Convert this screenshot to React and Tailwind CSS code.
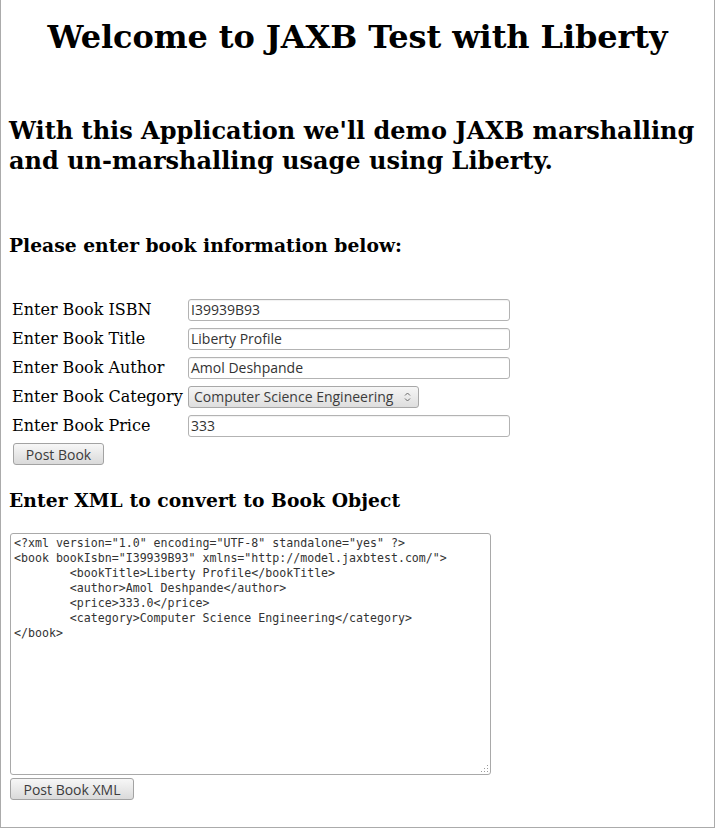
import React from "react";

const serif = { fontFamily: "'DejaVu Serif', serif" };
const uiFont = { fontFamily: "'Open Sans', 'Noto Sans', sans-serif" };
const mono = { fontFamily: "'DejaVu Sans Mono', monospace" };

const xml = `<?xml version="1.0" encoding="UTF-8" standalone="yes" ?>
<book bookIsbn="I39939B93" xmlns="http://model.jaxbtest.com/">
\t<bookTitle>Liberty Profile</bookTitle>
\t<author>Amol Deshpande</author>
\t<price>333.0</price>
\t<category>Computer Science Engineering</category>
</book>`;

function TextInput({ value }) {
  return (
    <div
      className="h-[22px] w-[322px] rounded-[3px] border border-[#b3b3b3] bg-white px-[2px] flex items-center text-[14px] text-[#333333] shadow-[inset_0_1px_1px_rgba(0,0,0,0.06)]"
      style={uiFont}
    >
      {value}
    </div>
  );
}

function Select({ value }) {
  return (
    <div
      className="h-[22px] w-[231px] rounded-[3px] border border-[#a8a8a8] bg-gradient-to-b from-[#f6f6f6] to-[#dedede] pl-[5px] pr-[7px] flex items-center justify-between text-[14px] text-[#3c3c3c]"
      style={uiFont}
    >
      <span>{value}</span>
      <svg width="7" height="12" viewBox="0 0 7 12" className="text-[#6a6a6a]">
        <path d="M1 4.5 L3.5 2 L6 4.5" fill="none" stroke="currentColor" strokeWidth="1" />
        <path d="M1 7.5 L3.5 10 L6 7.5" fill="none" stroke="currentColor" strokeWidth="1" />
      </svg>
    </div>
  );
}

function Button({ children, w }) {
  return (
    <div
      className={`h-[22px] ${w} rounded-[3px] border border-[#a3a3a3] bg-gradient-to-b from-[#f7f7f7] to-[#dadada] flex items-center justify-center text-[14px] text-[#3c3c3c]`}
      style={uiFont}
    >
      {children}
    </div>
  );
}

const rows = [
  ["Enter Book ISBN", <TextInput value="I39939B93" />],
  ["Enter Book Title", <TextInput value="Liberty Profile" />],
  ["Enter Book Author", <TextInput value="Amol Deshpande" />],
  ["Enter Book Category", <Select value="Computer Science Engineering" />],
  ["Enter Book Price", <TextInput value="333" />],
];

export default function App() {
  return (
    <div className="w-[715px] h-[828px] bg-white border-l border-r border-b border-[#ababab] overflow-hidden text-black">
      <div className="pl-[8px] flex flex-col items-start">
        <h1
          className="self-stretch ml-[-8px] mt-[19px] text-center text-[32px] leading-[37px] font-bold tracking-[-0.1px]"
          style={serif}
        >
          Welcome to JAXB Test with Liberty
        </h1>
        <h2 className="mt-[60px] text-[24px] leading-[30px] font-bold" style={serif}>
          With this Application we'll demo JAXB marshalling
          <br />
          and un-marshalling usage using Liberty.
        </h2>
        <h3 className="mt-[58px] text-[18.72px] leading-[22px] font-bold" style={serif}>
          Please enter book information below:
        </h3>
        <div className="mt-[39px] ml-[3px] flex flex-col">
          {rows.map(([label, control], i) => (
            <div key={i} className="h-[29px] flex items-center">
              <div className="w-[176px] text-[16px] leading-[19px]" style={serif}>
                {label}
              </div>
              {control}
            </div>
          ))}
        </div>
        <div className="mt-[3px] ml-[4px]">
          <Button w="w-[91px]">Post Book</Button>
        </div>
        <h3 className="mt-[24px] text-[18.72px] leading-[22px] font-bold tracking-[0.08px]" style={serif}>
          Enter XML to convert to Book Object
        </h3>
        <div className="relative mt-[22px] ml-[1px] w-[481px] h-[242px] rounded-[3px] border border-[#a9a9a9] bg-white px-[3px] py-[2px]">
          <pre
            className="text-[11.6px] leading-[15px] text-[#333] whitespace-pre"
            style={{ ...mono, tabSize: 8 }}
          >
            {xml}
          </pre>
          <svg className="absolute right-[1px] bottom-[1px]" width="10" height="10" viewBox="0 0 10 10">
            {[
              [8, 2], [8, 5], [5, 5], [8, 8], [5, 8], [2, 8],
            ].map(([x, y], i) => (
              <rect key={i} x={x} y={y} width="1" height="1" fill="#9a9a9a" />
            ))}
          </svg>
        </div>
        <div className="mt-[3px] ml-[1px]">
          <Button w="w-[124px]">Post Book XML</Button>
        </div>
      </div>
    </div>
  );
}
